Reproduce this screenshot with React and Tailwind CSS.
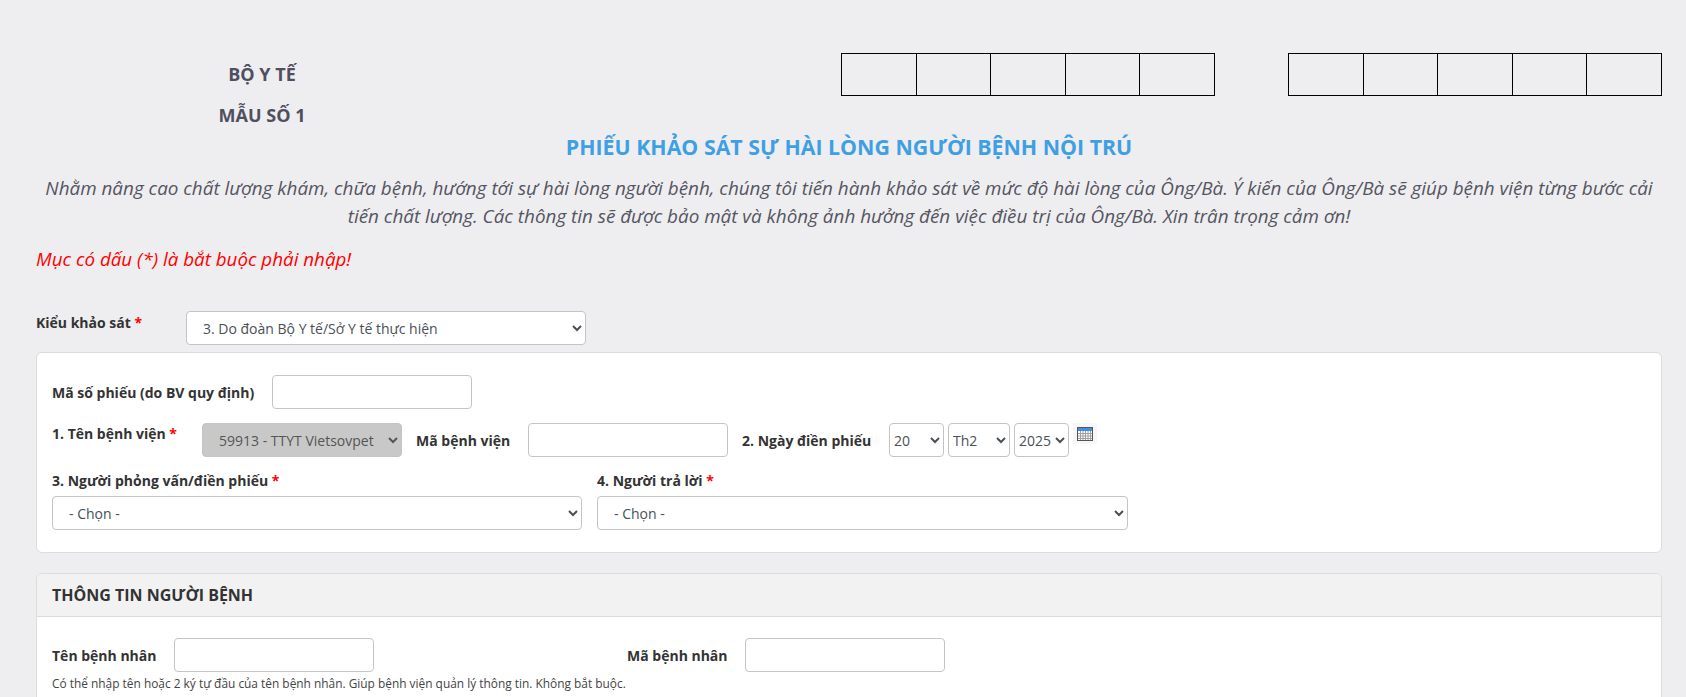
const inputClass = 'h-[34px] w-[200px] rounded border border-[#c4c4c4] bg-white';
const selectClass = 'h-[34px] rounded border border-[#c4c4c4] bg-white text-[14px] text-[#495057]';

function Req() {
  return <span className="text-[#ff0000]"> *</span>;
}

function CodeBoxes() {
  return (
    <div className="flex h-[43px] w-[374px] border border-black">
      <div className="flex-1 border-r border-black" />
      <div className="flex-1 border-r border-black" />
      <div className="flex-1 border-r border-black" />
      <div className="flex-1 border-r border-black" />
      <div className="flex-1" />
    </div>
  );
}

function CalendarIcon() {
  return (
    <div className="ml-1 flex h-[21px] w-[24px] items-center justify-center bg-[#f7f7f7]">
      <svg width="16" height="14" viewBox="0 0 16 14">
        <rect x="0.5" y="0.5" width="15" height="13" fill="#ffffff" stroke="#555555" />
        <rect x="1" y="1" width="14" height="3" fill="#3f8fe6" />
        <path d="M1 6.5H15M1 9H15M1 11.5H15M3.5 4V13M6 4V13M8.5 4V13M11 4V13M13.5 4V13" stroke="#a0a0a0" strokeWidth="1" fill="none" />
      </svg>
    </div>
  );
}

export default function App() {
  return (
    <div
      className="h-[697px] overflow-hidden bg-[#eeeef0] pr-[24px] pl-[36px] pt-[53px] text-[14px] text-[#333333]"
      style={{ fontFamily: '"Open Sans", sans-serif' }}
    >
      {/* Phần đầu */}
      <div className="flex">
        <div className="w-[452px] pt-[9px] text-center text-[18px] leading-[24px] font-bold text-[#4f4f5f]">
          <div>BỘ Y TẾ</div>
          <div className="mt-[17px]">MẪU SỐ 1</div>
        </div>
        <div className="ml-auto flex gap-[73px]">
          <CodeBoxes />
          <CodeBoxes />
        </div>
      </div>

      <h3 className="mt-[5px] text-center text-[21.33px] leading-[30px] font-bold text-[#3e9fe4]">
        PHIẾU KHẢO SÁT SỰ HÀI LÒNG NGƯỜI BỆNH NỘI TRÚ
      </h3>
      <p className="mt-[12px] text-center text-[18.87px] leading-[28px] text-[#555562] italic">
        Nhằm nâng cao chất lượng khám, chữa bệnh, hướng tới sự hài lòng người bệnh, chúng tôi tiến hành khảo sát về mức độ hài lòng của Ông/Bà. Ý kiến của Ông/Bà sẽ giúp bệnh viện từng bước cải tiến chất lượng. Các thông tin sẽ được bảo mật và không ảnh hưởng đến việc điều trị của Ông/Bà. Xin trân trọng cảm ơn!
      </p>
      <p className="mt-[16px] text-[18.8px] leading-[26px] text-[#ff0000] italic">
        Mục có dấu (*) là bắt buộc phải nhập!
      </p>

      {/* Kiểu khảo sát */}
      <div className="mt-[39px] flex items-start">
        <label className="w-[150px] pt-[2px] leading-[20px] font-bold">
          Kiểu khảo sát<Req />
        </label>
        <select className={`${selectClass} w-[400px] pl-3`} defaultValue="3">
          <option value="3">3. Do đoàn Bộ Y tế/Sở Y tế thực hiện</option>
        </select>
      </div>

      {/* Thông tin phiếu */}
      <div className="mt-[7px] h-[201px] rounded-md border border-[#dcdcdc] bg-white px-[15px] pt-[22px]">
        <div className="flex items-center">
          <label className="w-[220px] font-bold">Mã số phiếu (do BV quy định)</label>
          <input className={inputClass} />
        </div>

        <div className="mt-[14px] flex items-start">
          <label className="w-[150px] pt-[1px] leading-[20px] font-bold">
            1. Tên bệnh viện<Req />
          </label>
          <select disabled className="h-[34px] w-[200px] rounded border border-[#c4c4c4] bg-[#c8c8c8] pl-3 text-[14px] text-[#555555] opacity-100">
            <option>59913 - TTYT Vietsovpet</option>
          </select>
          <label className="ml-[14px] w-[112px] pt-[8px] leading-[20px] font-bold">Mã bệnh viện</label>
          <input className={inputClass} />
          <label className="ml-[14px] w-[147px] pt-[8px] leading-[20px] font-bold">2. Ngày điền phiếu</label>
          <div className="flex gap-[4px]">
            <select className={`${selectClass} w-[55px]`}>
              <option>20</option>
            </select>
            <select className={`${selectClass} w-[62px]`}>
              <option>Th2</option>
            </select>
            <select className={`${selectClass} w-[55px]`}>
              <option>2025</option>
            </select>
          </div>
          <CalendarIcon />
        </div>

        <div className="mt-[14px] flex gap-[15px]">
          <div className="w-[530px]">
            <label className="block leading-[20px] font-bold">
              3. Người phỏng vấn/điền phiếu<Req />
            </label>
            <select className={`${selectClass} mt-[5px] w-full pl-3`}>
              <option>- Chọn -</option>
            </select>
          </div>
          <div className="w-[531px]">
            <label className="block leading-[20px] font-bold">
              4. Người trả lời<Req />
            </label>
            <select className={`${selectClass} mt-[5px] w-full pl-3`}>
              <option>- Chọn -</option>
            </select>
          </div>
        </div>
      </div>

      {/* Thông tin người bệnh */}
      <div className="mt-[20px] rounded-md border border-[#dcdcdc] bg-white">
        <div className="flex h-[43px] items-center rounded-t-md border-b border-[#dcdcdc] bg-[#f2f2f2] px-[15px] text-[16px] font-bold">
          THÔNG TIN NGƯỜI BỆNH
        </div>
        <div className="px-[15px] pt-[21px] pb-[24px]">
          <div className="flex items-center">
            <label className="w-[122px] font-bold">Tên bệnh nhân</label>
            <input className={inputClass} />
            <label className="ml-[253px] w-[118px] font-bold">Mã bệnh nhân</label>
            <input className={inputClass} />
          </div>
          <p className="mt-[1px] text-[11.9px] leading-[20px] text-[#444444]">
            Có thể nhập tên hoặc 2 ký tự đầu của tên bệnh nhân. Giúp bệnh viện quản lý thông tin. Không bắt buộc.
          </p>
        </div>
      </div>
    </div>
  );
}
